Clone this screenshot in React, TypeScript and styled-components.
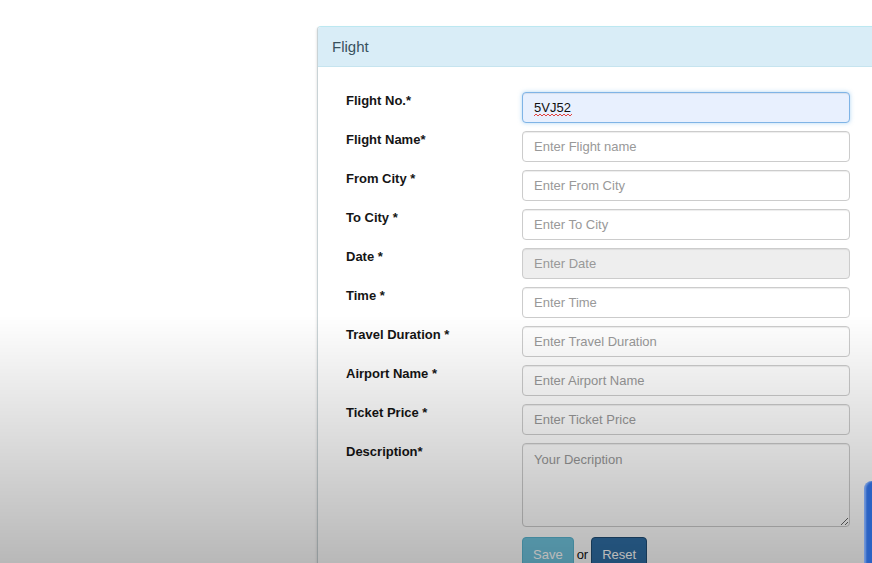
import styled, { createGlobalStyle } from "styled-components";

const GlobalStyle = createGlobalStyle`
  html, body {
    margin: 0;
    padding: 0;
    background: #ffffff;
    font-family: "Liberation Sans", Arial, sans-serif;
  }
`;

type Field = {
  label: string;
  placeholder?: string;
  value?: string;
  readOnly?: boolean;
  focused?: boolean;
};

const fields: Field[] = [
  { label: "Flight No.*", value: "5VJ52", focused: true },
  { label: "Flight Name*", placeholder: "Enter Flight name" },
  { label: "From City *", placeholder: "Enter From City" },
  { label: "To City *", placeholder: "Enter To City" },
  { label: "Date *", placeholder: "Enter Date", readOnly: true },
  { label: "Time *", placeholder: "Enter Time" },
  { label: "Travel Duration *", placeholder: "Enter Travel Duration" },
  { label: "Airport Name *", placeholder: "Enter Airport Name" },
  { label: "Ticket Price *", placeholder: "Enter Ticket Price" },
];

// red spell-check squiggle under the typed value
const Squiggle = () => (
  <SquiggleSvg width="38" height="4" viewBox="0 0 38 4">
    <path
      d="M0 3 L2 1 L4 3 L6 1 L8 3 L10 1 L12 3 L14 1 L16 3 L18 1 L20 3 L22 1 L24 3 L26 1 L28 3 L30 1 L32 3 L34 1 L36 3 L38 1"
      fill="none"
      stroke="#e0302a"
      strokeWidth="0.9"
    />
  </SquiggleSvg>
);

export default function App() {
  return (
    <Page>
      <GlobalStyle />
      <Panel>
        <PanelHeading>Flight</PanelHeading>
        <PanelBody>
          {fields.map((f) => (
            <Row key={f.label}>
              <Label>{f.label}</Label>
              <InputWrap>
                <Input
                  defaultValue={f.value}
                  placeholder={f.placeholder}
                  readOnly={f.readOnly}
                  $focused={f.focused}
                  spellCheck={false}
                />
                {f.focused && <Squiggle />}
              </InputWrap>
            </Row>
          ))}
          <Row>
            <Label>Description*</Label>
            <TextArea placeholder="Your Decription" />
          </Row>
          <Actions>
            <Button $kind="save" disabled>
              Save
            </Button>
            <Or>or</Or>
            <Button $kind="reset">Reset</Button>
          </Actions>
        </PanelBody>
      </Panel>
      <Shade />
      <SideTab />
    </Page>
  );
}

const Page = styled.div`
  height: 563px;
  overflow: hidden;
  padding: 26px 0 0 317px;
  box-sizing: border-box;
`;

const Panel = styled.section`
  width: 580px;
  border: 1px solid #bce8f1;
  border-left-color: #c9d3d6;
  border-radius: 4px;
  background: #fff;
  box-shadow: -1px 1px 2px rgba(0, 0, 0, 0.08);
`;

const PanelHeading = styled.header`
  height: 39px;
  display: flex;
  align-items: center;
  padding: 0 14px;
  background: #d9edf7;
  border-bottom: 1px solid #c6e4ef;
  color: #38515e;
  font-size: 15px;
  border-radius: 3px 3px 0 0;
`;

const PanelBody = styled.div`
  display: flex;
  flex-direction: column;
  gap: 8px;
  padding: 25px 0 20px 28px;
`;

const Row = styled.div`
  display: flex;
  align-items: flex-start;
`;

const Label = styled.label`
  width: 176px;
  flex: none;
  padding-top: 1px;
  font-size: 13px;
  font-weight: bold;
  line-height: 16px;
  color: #151515;
`;

const InputWrap = styled.div`
  position: relative;
`;

const SquiggleSvg = styled.svg`
  position: absolute;
  left: 12px;
  top: 21px;
  pointer-events: none;
`;

const Input = styled.input<{ $focused?: boolean }>`
  display: block;
  width: 328px;
  height: 31px;
  box-sizing: border-box;
  padding: 0 11px;
  font: 13px "Liberation Sans", Arial, sans-serif;
  color: #111;
  border: 1px solid ${(p) => (p.$focused ? "#7fb4e6" : "#cccccc")};
  border-radius: 4px;
  background: ${(p) => (p.$focused ? "#e8f0fe" : "#fff")};
  box-shadow: ${(p) =>
    p.$focused
      ? "inset 0 1px 1px rgba(0,0,0,.075), 0 0 4px rgba(102,175,233,.5)"
      : "inset 0 1px 1px rgba(0,0,0,.075)"};
  outline: none;

  &:read-only {
    background: #eeeeee;
  }
  &::placeholder {
    color: #999;
  }
`;

const TextArea = styled.textarea`
  width: 328px;
  height: 84px;
  box-sizing: border-box;
  padding: 8px 11px;
  font: 13px "Liberation Sans", Arial, sans-serif;
  border: 1px solid #cccccc;
  border-radius: 4px;
  box-shadow: inset 0 1px 1px rgba(0, 0, 0, 0.075);
  outline: none;

  &::placeholder {
    color: #999;
  }
`;

const Actions = styled.div`
  display: flex;
  align-items: center;
  gap: 3px;
  padding-left: 176px;
  margin-top: 2px;
`;

const Button = styled.button<{ $kind: "save" | "reset" }>`
  height: 34px;
  padding: 0 10px;
  font: 13px "Liberation Sans", Arial, sans-serif;
  color: #fff;
  border-radius: 4px;
  border: 1px solid ${(p) => (p.$kind === "save" ? "#5bb6d0" : "#204d74")};
  background: ${(p) => (p.$kind === "save" ? "#70c4de" : "#2f6ea5")};
  cursor: pointer;
`;

const Or = styled.span`
  font-size: 13px;
  color: #111;
`;

const Shade = styled.div`
  position: fixed;
  inset: 0;
  pointer-events: none;
  background: linear-gradient(
    to bottom,
    rgba(0, 0, 0, 0) 0,
    rgba(0, 0, 0, 0) 315px,
    rgba(0, 0, 0, 0.28) 563px
  );
`;

const SideTab = styled.div`
  position: fixed;
  left: 864px;
  top: 481px;
  width: 20px;
  height: 90px;
  border-radius: 8px 0 0 0;
  background: #2a62c4;
  box-shadow: inset 2px 0 2px rgba(255, 255, 255, 0.35);
`;
